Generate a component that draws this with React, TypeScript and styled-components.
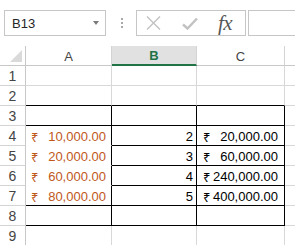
import React from 'react';
import styled, { createGlobalStyle } from 'styled-components';

const GlobalStyle = createGlobalStyle`
  body {
    margin: 0;
    background: #ffffff;
    font-family: "Liberation Sans", "Noto Sans", "DejaVu Sans", sans-serif;
  }
`;

const Sheet = styled.div`
  width: 295px;
  height: 245px;
  overflow: hidden;
  background: #ffffff;
`;

const FormulaBar = styled.div`
  display: flex;
  align-items: center;
  height: 26px;
  margin-top: 10px;
  padding-left: 4px;
`;

const NameBox = styled.div`
  width: 102px;
  height: 26px;
  box-sizing: border-box;
  border: 1px solid #c6c6c6;
  display: flex;
  align-items: center;
  justify-content: space-between;
  padding: 0 6px 0 7px;
  font-size: 13px;
  color: #262626;
`;

const DropArrow = styled.span`
  width: 0;
  height: 0;
  border-left: 3.5px solid transparent;
  border-right: 3.5px solid transparent;
  border-top: 4px solid #7a7a7a;
`;

const Grip = styled.div`
  display: flex;
  flex-direction: column;
  gap: 2px;
  margin: 0 13px 0 15px;
  span {
    width: 2px;
    height: 2px;
    background: #a8a8a8;
  }
`;

const ButtonBox = styled.div`
  width: 110px;
  height: 26px;
  box-sizing: border-box;
  border: 1px solid #c6c6c6;
  display: flex;
  align-items: center;
  padding-left: 9px;
`;

const IconSlot = styled.div<{ $w: number }>`
  width: ${(p) => p.$w}px;
  display: flex;
  align-items: center;
`;

const Fx = styled.span`
  font-family: "Liberation Serif", "DejaVu Serif", serif;
  font-style: italic;
  font-size: 21px;
  color: #575757;
  letter-spacing: -0.5px;
  line-height: 1;
`;

const FormulaInput = styled.div`
  flex: 1;
  height: 26px;
  box-sizing: border-box;
  border: 1px solid #c6c6c6;
  border-right: none;
  margin-left: 2px;
`;

const Grid = styled.div`
  display: grid;
  grid-template-columns: 26px 86px 85px 88px 1fr;
  grid-auto-rows: 20px;
  margin-top: 10px;
  font-size: 13px;
`;

const Corner = styled.div`
  border-right: 1px solid #c8c8c8;
  border-bottom: 1px solid #c8c8c8;
  box-sizing: border-box;
  display: flex;
  align-items: flex-end;
  justify-content: flex-end;
  padding: 0 3px 3px 0;
`;

const ColHead = styled.div<{ $active?: boolean }>`
  box-sizing: border-box;
  border-right: 1px solid #d4d4d4;
  border-bottom: ${(p) => (p.$active ? '2px solid #217346' : '1px solid #c8c8c8')};
  background: ${(p) => (p.$active ? '#e1e1e1' : '#ffffff')};
  color: ${(p) => (p.$active ? '#217346' : '#444444')};
  font-weight: ${(p) => (p.$active ? 700 : 400)};
  display: flex;
  align-items: center;
  justify-content: center;
  padding-top: 1px;
`;

const RowHead = styled.div`
  box-sizing: border-box;
  border-right: 1px solid #c8c8c8;
  border-bottom: 1px solid #d4d4d4;
  color: #444444;
  font-size: 14px;
  display: flex;
  align-items: center;
  justify-content: center;
  padding-top: 1px;
`;

type Edge = 'grid' | 'black' | 'none';

const edgeColor = (e: Edge) =>
  e === 'black' ? '#000000' : e === 'grid' ? '#d8d8d8' : '#ffffff';

const Cell = styled.div<{ $right: Edge; $bottom: Edge; $color?: string; $pad?: number }>`
  box-sizing: border-box;
  border-right: 1px solid ${(p) => edgeColor(p.$right)};
  border-bottom: 1px solid ${(p) => edgeColor(p.$bottom)};
  color: ${(p) => p.$color || '#000000'};
  display: flex;
  align-items: center;
  justify-content: space-between;
  padding: 2px ${(p) => p.$pad ?? 5}px 0 ${(p) => p.$pad ?? 5}px;
  white-space: nowrap;
  overflow: hidden;
`;

const NumRight = styled.span`
  margin-left: auto;
`;

type Row = {
  n: number;
  a?: string;
  b?: string;
  c?: string;
  edges: [Edge, Edge, Edge, Edge, Edge, Edge];
};

// edges: A right, A bottom, B right, B bottom, C right, C bottom
const rows: Row[] = [
  { n: 1, edges: ['grid', 'grid', 'grid', 'grid', 'grid', 'grid'] },
  { n: 2, edges: ['grid', 'black', 'grid', 'black', 'grid', 'black'] },
  { n: 3, edges: ['black', 'black', 'black', 'black', 'black', 'black'] },
  { n: 4, a: '10,000.00', b: '2', c: '20,000.00', edges: ['black', 'none', 'black', 'black', 'black', 'black'] },
  { n: 5, a: '20,000.00', b: '3', c: '60,000.00', edges: ['black', 'none', 'black', 'black', 'black', 'black'] },
  { n: 6, a: '60,000.00', b: '4', c: '240,000.00', edges: ['black', 'none', 'black', 'black', 'black', 'black'] },
  { n: 7, a: '80,000.00', b: '5', c: '400,000.00', edges: ['black', 'black', 'black', 'black', 'black', 'black'] },
  { n: 8, edges: ['black', 'black', 'black', 'black', 'black', 'black'] },
  { n: 9, edges: ['grid', 'grid', 'grid', 'grid', 'grid', 'grid'] },
];

function Money({ value }: { value?: string }) {
  if (!value) return null;
  return (
    <>
      <span>₹</span>
      <NumRight>{value}</NumRight>
    </>
  );
}

export default function App() {
  return (
    <Sheet>
      <GlobalStyle />
      <FormulaBar>
        <NameBox>
          B13
          <DropArrow />
        </NameBox>
        <Grip>
          <span />
          <span />
          <span />
        </Grip>
        <ButtonBox>
          <IconSlot $w={36}>
            <svg width="15" height="14" viewBox="0 0 15 14">
              <path d="M1 0.5 L14 13.5 M14 0.5 L1 13.5" stroke="#c2c2c2" strokeWidth="1.4" fill="none" />
            </svg>
          </IconSlot>
          <IconSlot $w={36}>
            <svg width="16" height="13" viewBox="0 0 16 13">
              <path d="M1 7.5 L5.5 11.5 L15 1.5" stroke="#c2c2c2" strokeWidth="2.4" fill="none" />
            </svg>
          </IconSlot>
          <IconSlot $w={24}>
            <Fx>fx</Fx>
          </IconSlot>
        </ButtonBox>
        <FormulaInput />
      </FormulaBar>

      <Grid>
        <Corner>
          <svg width="12" height="12" viewBox="0 0 12 12">
            <path d="M12 0 L12 12 L0 12 Z" fill="#dadada" />
          </svg>
        </Corner>
        <ColHead>A</ColHead>
        <ColHead $active>B</ColHead>
        <ColHead>C</ColHead>
        <ColHead />

        {rows.map((r) => (
          <React.Fragment key={r.n}>
            <RowHead>{r.n}</RowHead>
            <Cell $right={r.edges[0]} $bottom={r.edges[1]} $color="#c0581a">
              <Money value={r.a} />
            </Cell>
            <Cell $right={r.edges[2]} $bottom={r.edges[3]} $pad={3}>
              <NumRight>{r.b}</NumRight>
            </Cell>
            <Cell $right={r.edges[4]} $bottom={r.edges[5]} $pad={6}>
              <Money value={r.c} />
            </Cell>
            <Cell $right="grid" $bottom="grid" />
          </React.Fragment>
        ))}
      </Grid>
    </Sheet>
  );
}
